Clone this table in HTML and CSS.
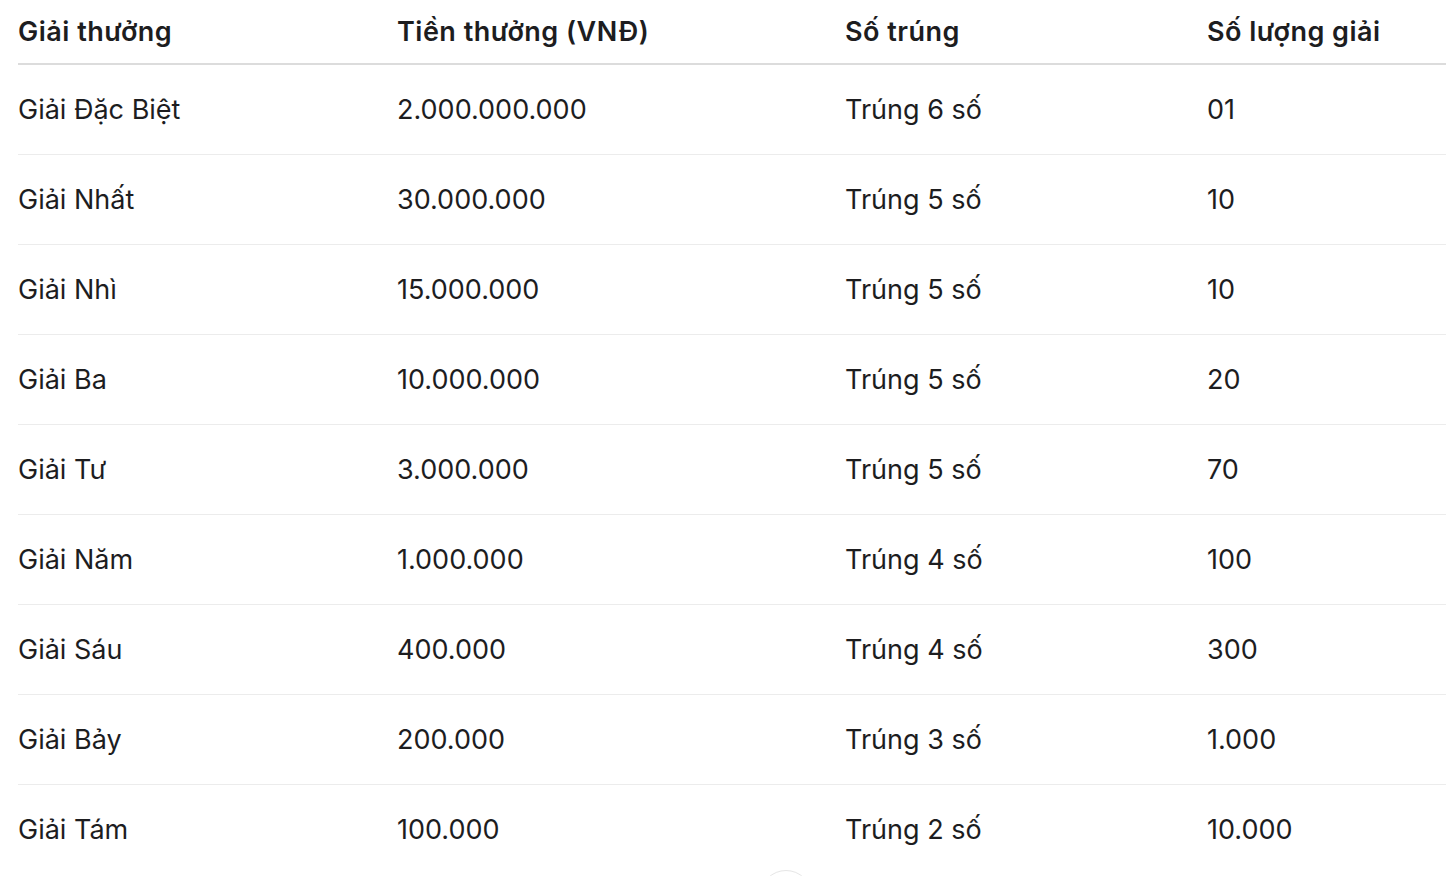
FILE: index.html
```html
<!DOCTYPE html>
<html lang="vi">
<head>
<meta charset="utf-8">
<link rel="stylesheet" href="styles.css">
</head>
<body>
<table class="prize-table">
  <thead>
    <tr>
      <th class="col-1">Giải thưởng</th>
      <th class="col-2">Tiền thưởng (VNĐ)</th>
      <th class="col-3">Số trúng</th>
      <th class="col-4">Số lượng giải</th>
    </tr>
  </thead>
  <tbody>
    <tr><td>Giải Đặc Biệt</td><td>2.000.000.000</td><td>Trúng 6 số</td><td>01</td></tr>
    <tr><td>Giải Nhất</td><td>30.000.000</td><td>Trúng 5 số</td><td>10</td></tr>
    <tr><td>Giải Nhì</td><td>15.000.000</td><td>Trúng 5 số</td><td>10</td></tr>
    <tr><td>Giải Ba</td><td>10.000.000</td><td>Trúng 5 số</td><td>20</td></tr>
    <tr><td>Giải Tư</td><td>3.000.000</td><td>Trúng 5 số</td><td>70</td></tr>
    <tr><td>Giải Năm</td><td>1.000.000</td><td>Trúng 4 số</td><td>100</td></tr>
    <tr><td>Giải Sáu</td><td>400.000</td><td>Trúng 4 số</td><td>300</td></tr>
    <tr><td>Giải Bảy</td><td>200.000</td><td>Trúng 3 số</td><td>1.000</td></tr>
    <tr class="last"><td>Giải Tám</td><td>100.000</td><td>Trúng 2 số</td><td>10.000</td></tr>
  </tbody>
</table>
<div class="scroll-hint"></div>
</body>
</html>
```

FILE: styles.css
```css
html, body {
  margin: 0;
  padding: 0;
  background: #ffffff;
}
body {
  padding-left: 18px;
  font-family: Inter, "Noto Sans", "Liberation Sans", sans-serif;
  color: #1d1d1f;
  overflow: hidden;
  height: 876px;
  position: relative;
}
.prize-table {
  width: calc(100% + 10px);
  border-collapse: collapse;
  table-layout: fixed;
}
.prize-table th,
.prize-table td {
  text-align: left;
  padding: 0;
  font-size: 27px;
  white-space: nowrap;
}
.prize-table th {
  font-weight: 600;
  letter-spacing: 0.5px;
  height: 63px;
  border-bottom: 2px solid #dcdcdc;
}
.prize-table td {
  font-weight: 400;
  letter-spacing: 0;
  height: 89px;
  border-bottom: 1px solid #ececec;
}
.prize-table tr.last td {
  border-bottom: none;
}
.col-1 { width: 379px; }
.col-2 { width: 448px; }
.col-3 { width: 362px; }
.scroll-hint {
  position: absolute;
  left: 760px;
  top: 870px;
  width: 50px;
  height: 50px;
  border-radius: 50%;
  border: 1px solid #e6e6e6;
  background: #fff;
}
```
